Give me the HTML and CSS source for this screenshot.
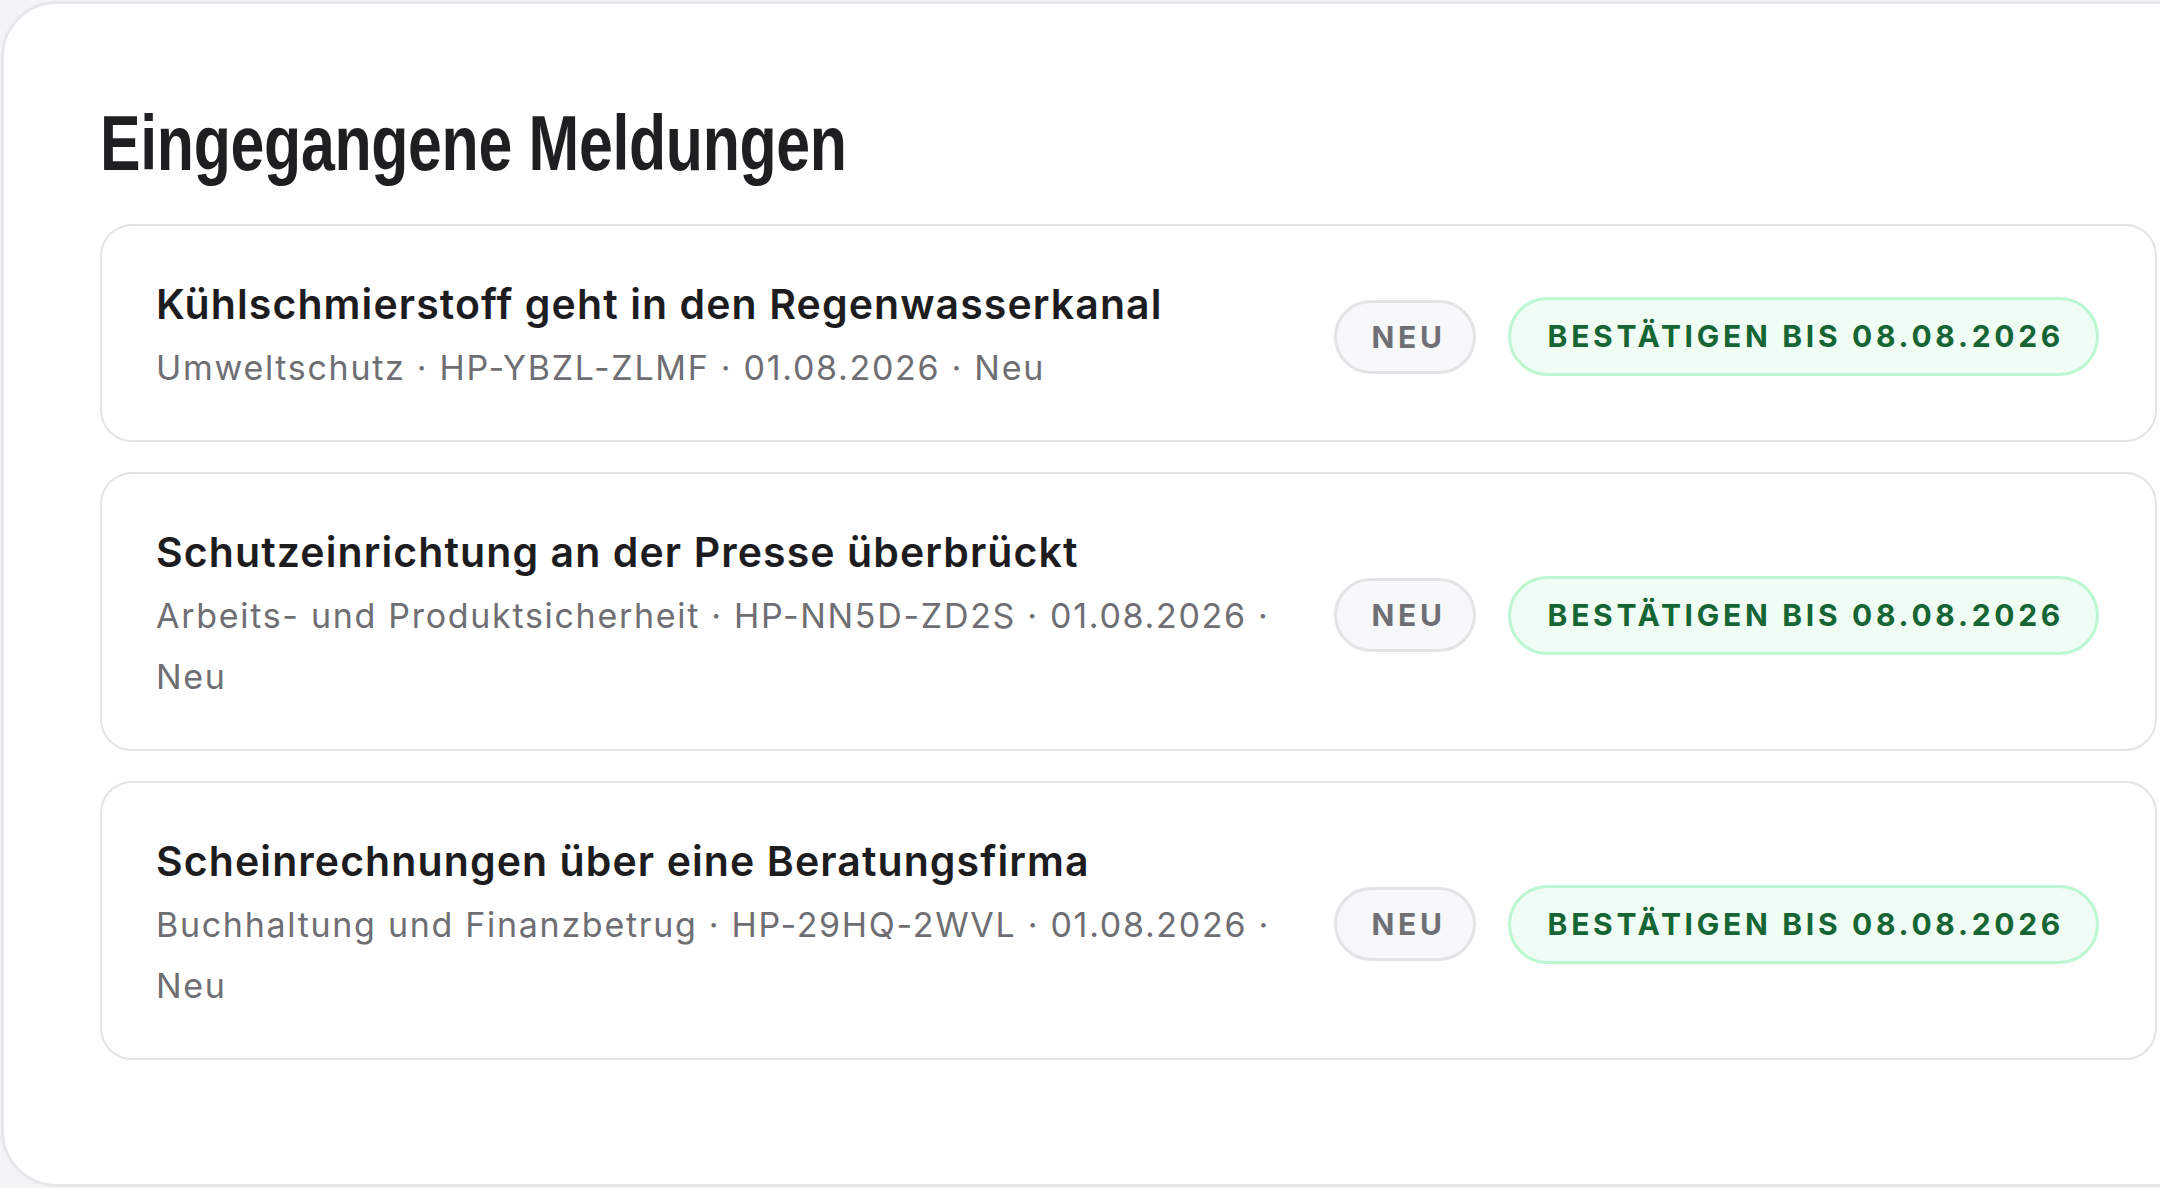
FILE: index.html
```html
<!DOCTYPE html>
<html lang="de">
<head>
<meta charset="utf-8">
<title>Eingegangene Meldungen</title>
<link rel="stylesheet" href="styles.css">
</head>
<body>
<section class="panel">
  <h1 class="heading">Eingegangene Meldungen</h1>
  <div class="list">
    <article class="card">
      <div class="info">
        <div class="title">Kühlschmierstoff geht in den Regenwasserkanal</div>
        <div class="meta">Umweltschutz · HP-YBZL-ZLMF · 01.08.2026 · Neu</div>
      </div>
      <div class="badges">
        <span class="pill pill-neu">NEU</span>
        <span class="pill pill-due">BESTÄTIGEN BIS 08.08.2026</span>
      </div>
    </article>
    <article class="card">
      <div class="info">
        <div class="title">Schutzeinrichtung an der Presse überbrückt</div>
        <div class="meta">Arbeits- und Produktsicherheit · HP-NN5D-ZD2S · 01.08.2026 · Neu</div>
      </div>
      <div class="badges">
        <span class="pill pill-neu">NEU</span>
        <span class="pill pill-due">BESTÄTIGEN BIS 08.08.2026</span>
      </div>
    </article>
    <article class="card">
      <div class="info">
        <div class="title">Scheinrechnungen über eine Beratungsfirma</div>
        <div class="meta">Buchhaltung und Finanzbetrug · HP-29HQ-2WVL · 01.08.2026 · Neu</div>
      </div>
      <div class="badges">
        <span class="pill pill-neu">NEU</span>
        <span class="pill pill-due">BESTÄTIGEN BIS 08.08.2026</span>
      </div>
    </article>
  </div>
</section>
</body>
</html>
```

FILE: styles.css
```css
html, body {
  margin: 0;
  padding: 0;
}
body {
  background: #f3f4f6;
  overflow: hidden;
  height: 1188px;
  font-family: Inter, "Noto Sans", "Liberation Sans", sans-serif;
}
.panel {
  box-sizing: border-box;
  margin: 1px 0 0 1px;
  width: 2260px;
  height: 1186px;
  background: #ffffff;
  border: 3px solid #e5e7eb;
  border-radius: 56px;
  padding: 93px 0 0 96px;
}
.heading {
  margin: 0 0 35px 0;
  font-family: "Liberation Sans", Arial, sans-serif;
  font-weight: 700;
  font-size: 77px;
  line-height: 92px;
  letter-spacing: -0.4px;
  color: #1f1f21;
  transform: scaleX(0.79);
  transform-origin: 0 50%;
  white-space: nowrap;
}
.list {
  width: 2057px;
  display: flex;
  flex-direction: column;
  gap: 30px;
}
.card {
  box-sizing: border-box;
  border: 2px solid #e4e4e7;
  border-radius: 32px;
  padding: 49px 56px 42px 54px;
  display: flex;
  align-items: center;
  gap: 32px;
  background: #ffffff;
}
.info {
  flex: 1;
  min-width: 0;
}
.title {
  font-weight: 600;
  font-size: 41px;
  line-height: 58px;
  letter-spacing: 1.1px;
  color: #1d1d1f;
}
.meta {
  margin-top: 4px;
  font-size: 34px;
  line-height: 61px;
  letter-spacing: 1.7px;
  color: #6e6e73;
}
.badges {
  display: flex;
  align-items: center;
  gap: 32px;
  flex: none;
}
.pill {
  display: inline-block;
  font-weight: 700;
  font-size: 30px;
  line-height: 36px;
  letter-spacing: 3.7px;
  border-radius: 999px;
  border: 3px solid;
  white-space: nowrap;
}
.pill-neu {
  padding: 16px 27px 16px 34px;
  color: #6f6f76;
  background: #f7f8fa;
  border-color: #e4e4e7;
}
.pill-due {
  padding: 18px 32px 19px 37px;
  color: #166534;
  background: #f0fdf4;
  border-color: #bbf7d0;
}
```
